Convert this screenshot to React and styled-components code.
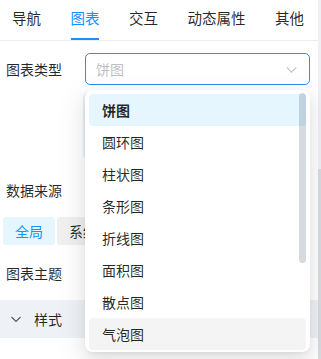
import React from "react";
import styled, { createGlobalStyle } from "styled-components";

const GlobalStyle = createGlobalStyle`
  html, body {
    margin: 0;
    padding: 0;
    background: #ffffff;
  }
  body {
    font-family: "Noto Sans CJK SC", "Noto Sans", sans-serif;
    font-size: 14px;
    color: rgba(0, 0, 0, 0.85);
  }
`;

const tabs = ["导航", "图表", "交互", "动态属性", "其他"];
const chartTypes = ["饼图", "圆环图", "柱状图", "条形图", "折线图", "面积图", "散点图", "气泡图"];

function Chevron({ color = "currentColor", size = 12 }) {
  return (
    <svg width={size} height={size} viewBox="0 0 12 12" fill="none">
      <path d="M1.5 4l4.5 4.5L10.5 4" stroke={color} strokeWidth="1.1" />
    </svg>
  );
}

function App() {
  return (
    <>
      <GlobalStyle />
      <Shell>
        <Panel>
          <TabBar>
            {tabs.map((t) => (
              <Tab key={t} $active={t === "图表"}>
                {t}
              </Tab>
            ))}
          </TabBar>

          <Form>
            <Row>
              <Label>图表类型</Label>
              <Control>
                <SelectBox>
                  <Placeholder>饼图</Placeholder>
                  <Chevron color="#c4c4c4" size={13} />
                </SelectBox>
                <Dropdown>
                  {chartTypes.map((c, i) => (
                    <Option
                      key={c}
                      $selected={i === 0}
                      $hover={i === chartTypes.length - 1}
                    >
                      {c}
                    </Option>
                  ))}
                  <Thumb />
                </Dropdown>
                <Preview />
              </Control>
            </Row>

            <StackLabel $gap={19}>数据来源</StackLabel>
            <Segments>
              <Segment $active>全局</Segment>
              <Segment>系统</Segment>
            </Segments>

            <StackLabel $gap={17}>图表主题</StackLabel>
          </Form>

          <CollapseHeader>
            <Chevron color="#555" size={12} />
            <span>样式</span>
          </CollapseHeader>
        </Panel>
        <PageScroll>
          <PageThumb />
        </PageScroll>
      </Shell>
    </>
  );
}

const Shell = styled.div`
  display: flex;
  width: 321px;
  height: 359px;
  overflow: hidden;
`;

const Panel = styled.div`
  flex: 1;
  min-width: 0;
  display: flex;
  flex-direction: column;
`;

const PageScroll = styled.div`
  width: 3px;
  background: #eef0f3;
  display: flex;
  flex-direction: column;
  justify-content: flex-end;
`;

const PageThumb = styled.div`
  height: 190px;
  background: #d8dbe0;
`;

const TabBar = styled.div`
  display: flex;
  gap: 29.5px;
  padding-left: 12px;
  height: 41px;
  box-sizing: border-box;
  border-bottom: 1px solid #eceef1;
`;

const Tab = styled.div`
  position: relative;
  display: flex;
  align-items: center;
  font-size: 14.5px;
  line-height: 22px;
  padding-bottom: 4px;
  white-space: nowrap;
  color: ${(p) => (p.$active ? "#1890ff" : "rgba(0,0,0,0.85)")};

  &::after {
    content: "";
    position: absolute;
    left: 0;
    right: 1px;
    bottom: 0;
    height: 2px;
    background: ${(p) => (p.$active ? "#1890ff" : "transparent")};
  }
`;

const Form = styled.div`
  display: flex;
  flex-direction: column;
  padding-top: 12px;
`;

const Row = styled.div`
  display: flex;
  align-items: flex-start;
`;

const Label = styled.div`
  width: 85px;
  padding-left: 6px;
  box-sizing: border-box;
  line-height: 32px;
  flex-shrink: 0;
`;

const Control = styled.div`
  position: relative;
  width: 225px;
  display: flex;
  flex-direction: column;
`;

const SelectBox = styled.div`
  height: 32px;
  box-sizing: border-box;
  border: 1px solid #2a8df8;
  border-radius: 5px;
  display: flex;
  align-items: center;
  justify-content: space-between;
  padding: 0 11px 0 10px;
`;

const Placeholder = styled.span`
  color: #bfbfbf;
`;

const Preview = styled.div`
  margin: 7px 0 0 -2px;
  height: 68px;
  background: #e4f2fb;
  border-radius: 6px;
`;

const Dropdown = styled.div`
  position: absolute;
  z-index: 10;
  top: 37px;
  left: 0;
  right: 0;
  padding: 4px;
  height: 262px;
  box-sizing: border-box;
  background: #ffffff;
  border-radius: 8px;
  overflow: hidden;
  box-shadow: 0 3px 6px -4px rgba(0, 0, 0, 0.12),
    0 6px 16px 0 rgba(0, 0, 0, 0.08), 0 9px 28px 8px rgba(0, 0, 0, 0.05);
`;

const Option = styled.div`
  height: 32px;
  line-height: 32px;
  padding: 0 13px;
  border-radius: 4px;
  font-weight: ${(p) => (p.$selected ? 600 : 400)};
  color: rgba(0, 0, 0, 0.85);
  background: ${(p) =>
    p.$selected ? "#e6f6fe" : p.$hover ? "#f4f4f4" : "transparent"};
`;

const Thumb = styled.div`
  position: absolute;
  top: 3px;
  right: 4px;
  width: 7px;
  height: 170px;
  border-radius: 4px;
  background: rgba(40, 70, 100, 0.2);
`;

const StackLabel = styled.div`
  padding-left: 6px;
  line-height: 22px;
  margin-top: ${(p) => p.$gap}px;
`;

const Segments = styled.div`
  display: flex;
  gap: 2px;
  padding-left: 3px;
  margin-top: 16px;
`;

const Segment = styled.div`
  height: 28px;
  line-height: 28px;
  padding: 0 12px;
  border-radius: 3px;
  background: ${(p) => (p.$active ? "#e6f6fe" : "#f0f0f0")};
  color: ${(p) => (p.$active ? "#1890ff" : "rgba(0,0,0,0.85)")};
`;

const CollapseHeader = styled.div`
  margin-top: 16px;
  height: 38px;
  display: flex;
  align-items: center;
  gap: 12px;
  padding-left: 10px;
  background: #eef2f6;
  color: rgba(0, 0, 0, 0.85);
`;

export default App;
